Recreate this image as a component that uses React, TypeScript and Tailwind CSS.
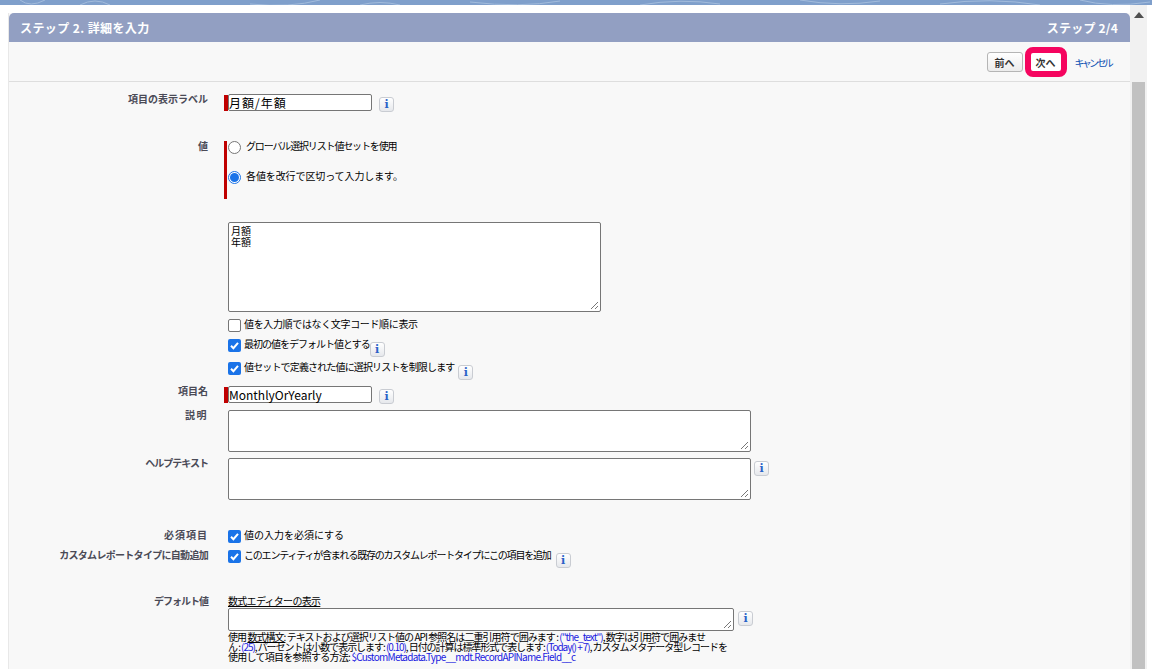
const FONT = '[font-family:"Noto_Sans_CJK_JP",sans-serif]'
const BLUE = 'text-[#1a1ae0]'

function Info({ className = '' }: { className?: string }) {
  return (
    <span className={`inline-flex w-[15px] h-[15px] flex-shrink-0 items-center justify-center rounded-[3px] border border-[#c9ccd2] bg-gradient-to-b from-white to-[#e6e8ec] text-[11px] leading-none font-bold text-[#2a62c8] [font-family:"DejaVu_Serif",serif] ${className}`}>
      i
    </span>
  )
}

function Check({ checked }: { checked?: boolean }) {
  if (!checked) {
    return <span className="w-[13px] h-[13px] flex-shrink-0 rounded-[2px] border border-[#767676] bg-white" />
  }
  return (
    <span className="w-[13px] h-[13px] flex-shrink-0 rounded-[2px] bg-[#1a73e8] flex items-center justify-center">
      <svg width="11" height="11" viewBox="0 0 11 11" fill="none">
        <path d="M2 5.8 L4.4 8.2 L9 2.8" stroke="white" strokeWidth="2" />
      </svg>
    </span>
  )
}

function Radio({ checked }: { checked?: boolean }) {
  return (
    <span className={`w-[13px] h-[13px] flex-shrink-0 rounded-full border bg-white flex items-center justify-center ${checked ? 'border-[#1a73e8]' : 'border-[#767676]'}`}>
      {checked && <span className="w-[9px] h-[9px] rounded-full bg-[#1a73e8]" />}
    </span>
  )
}

function Label({ children, className = '' }: { children: React.ReactNode; className?: string }) {
  return (
    <div className={`w-[199px] flex-shrink-0 -mt-[1px] whitespace-nowrap text-right text-[10px] leading-3 font-bold text-[#4a4a56] ${className}`}>
      {children}
    </div>
  )
}

function TextArea({ className, children }: { className: string; children?: React.ReactNode }) {
  return (
    <div className={`relative flex-shrink-0 rounded-[2px] border border-[#767676] bg-white px-[2px] py-[2px] text-[10px] leading-[11px] text-black ${className}`}>
      {children}
      <svg className="absolute right-[1px] bottom-[1px]" width="9" height="9" viewBox="0 0 9 9" stroke="#777" strokeWidth="1">
        <path d="M1 8 L8 1 M5 8 L8 5" />
      </svg>
    </div>
  )
}

function TextInput({ value, className = '' }: { value: string; className?: string }) {
  return (
    <div className={`w-[144px] h-[17px] flex-shrink-0 rounded-[2px] border border-[#767676] bg-white text-[12px] leading-[15px] text-black ${className}`}>
      {value}
    </div>
  )
}

export default function App() {
  return (
    <div className={`relative h-[669px] w-[1152px] overflow-hidden bg-white text-black ${FONT}`}>
      <div className="h-[5px] bg-[#7f9fcb] overflow-hidden">
        <svg width="1152" height="5" viewBox="0 0 1152 5" fill="none" stroke="#a3bcdc" strokeWidth="1">
          <path d="M20 0 Q30 8 45 0 M80 5 Q95 -3 110 5 M250 4 Q290 8 320 0 M360 5 Q380 0 400 5 M470 2 Q520 8 560 1 M640 5 Q680 -2 720 4 M800 0 Q840 7 880 1 M940 4 Q990 -3 1040 5 M1080 0 Q1110 8 1150 2" />
        </svg>
      </div>

      <div className="absolute right-[5px] top-[5px] bottom-0 w-[17px] bg-[#f1f1f1] flex flex-col items-center">
        <svg className="mt-[7px]" width="10" height="6" viewBox="0 0 10 6">
          <path d="M5 0 L10 6 L0 6 Z" fill="#505050" />
        </svg>
        <div className="mt-[64px] w-[13px] flex-1 bg-[#c1c1c1]" />
      </div>

      <div className="ml-[8px] mt-[8px] w-[1122px] h-[656px] overflow-hidden border-l border-[#e8e8e8] bg-[#f8f8f8]">
        <div className="h-[29px] rounded-t-[5px] bg-[#929fc2] pl-[11px] pr-[12px] flex items-center justify-between text-[12px] font-bold text-white">
          <span className="tracking-[0.4px]">ステップ 2. 詳細を入力</span>
          <span className="tracking-[0.2px]">ステップ 2/4</span>
        </div>

        <div className="h-[40px] border-b border-[#dedede] flex items-center justify-end pr-[19px] pt-[1px]">
          <button className="w-[36px] h-[20px] rounded-[3px] border border-[#b5b5b5] bg-gradient-to-b from-white to-[#ececec] text-[10px] font-bold text-[#333]">前へ</button>
          <span className="ml-[2px] w-[42px] h-[30px] rounded-[8px] border-[6px] border-[#f5055f] bg-white flex items-center justify-center text-[10px] font-bold text-[#333]">次へ</span>
          <a className="ml-[8px] whitespace-nowrap text-[10px] tracking-[-2.7px] text-[#0b4fb3]">キャンセル</a>
        </div>

        <div className="pt-[12px]">
          <div className="flex h-[47px]">
            <Label>項目の表示ラベル</Label>
            <div className="ml-[16px] w-[4px] h-[16px] mt-[1px] bg-[#c00000]" />
            <TextInput value="月額/年額" className="tracking-[1px]" />
            <Info className="ml-[7px] mt-[3px]" />
          </div>

          <div className="flex h-[81px]">
            <Label>値</Label>
            <div className="ml-[16px] w-[3px] h-[58px] bg-[#c00000]" />
            <div className="ml-[1px] flex flex-col text-[10px] leading-3">
              <div className="flex items-start gap-[5px] h-[30px]">
                <Radio />
                <span className="-mt-[1px] tracking-[-1.15px]">グローバル選択リスト値セットを使用</span>
              </div>
              <div className="flex items-start gap-[5px]">
                <Radio checked />
                <span className="-mt-[1px] tracking-[-0.1px]">各値を改行で区切って入力します。</span>
              </div>
            </div>
          </div>

          <div className="ml-[219px] flex flex-col text-[10px] leading-3">
            <TextArea className="w-[373px] h-[90px]">
              <div>月額</div>
              <div>年額</div>
            </TextArea>
            <div className="mt-[7px] flex items-start gap-[3px] h-[13px]">
              <Check />
              <span className="-mt-[1px] tracking-[-0.35px]">値を入力順ではなく文字コード順に表示</span>
            </div>
            <div className="mt-[7px] flex items-start h-[16px]">
              <Check checked />
              <span className="ml-[3px] -mt-[1px] tracking-[-1px]">最初の値をデフォルト値とする</span>
              <Info className="mt-[3px]" />
            </div>
            <div className="mt-[7px] flex items-start h-[16px]">
              <Check checked />
              <span className="ml-[3px] -mt-[1px] tracking-[-0.85px]">値セットで定義された値に選択リストを制限します</span>
              <Info className="ml-[4px] mt-[3px]" />
            </div>
          </div>

          <div className="mt-[8px] flex h-[24px]">
            <Label>項目名</Label>
            <div className="ml-[16px] w-[4px] h-[16px] mt-[1px] bg-[#c00000]" />
            <TextInput value="MonthlyOrYearly" />
            <Info className="ml-[7px] mt-[3px]" />
          </div>

          <div className="flex h-[48px]">
            <Label className="tracking-[1.5px]">説明</Label>
            <TextArea className="ml-[20px] w-[523px] h-[42px]" />
          </div>

          <div className="flex h-[72px]">
            <Label className="tracking-[-1px]">ヘルプテキスト</Label>
            <TextArea className="ml-[20px] w-[523px] h-[42px]" />
            <Info className="ml-[3px] mt-[3px]" />
          </div>

          <div className="flex h-[20px] text-[10px] leading-3">
            <Label className="tracking-[1px]">必須項目</Label>
            <div className="ml-[20px] flex items-start gap-[3px]">
              <Check checked />
              <span className="-mt-[1px]">値の入力を必須にする</span>
            </div>
          </div>

          <div className="flex h-[46px] text-[10px] leading-3">
            <Label className="tracking-[-0.7px]">カスタムレポートタイプに自動追加</Label>
            <div className="ml-[20px] flex items-start gap-[3px]">
              <Check checked />
              <span className="-mt-[1px] whitespace-nowrap tracking-[-1.2px]">このエンティティが含まれる既存のカスタムレポートタイプにこの項目を追加</span>
              <Info className="ml-[2px] mt-[3px]" />
            </div>
          </div>

          <div className="flex">
            <Label className="tracking-[-1px]">デフォルト値</Label>
            <div className="ml-[20px] w-[530px] text-[10px] leading-[10px]">
              <div className="h-[12px] leading-3 -mt-[1px] mb-[1px]">
                <span className="underline tracking-[-0.7px]">数式エディターの表示</span>
              </div>
              <div className="flex">
                <TextArea className="w-[506px] h-[23px]" />
                <Info className="ml-[4px] mt-[3px]" />
              </div>
              <div className="mt-[1px] whitespace-nowrap">
                <div className="tracking-[-0.95px]">
                  使用 <span className="underline">数式構文:</span> テキストおよび選択リスト値の API 参照名は二重引用符で囲みます : <span className={BLUE}>("the_text")</span>, 数字は引用符で囲みませ
                </div>
                <div className="tracking-[-1.05px]">
                  ん : <span className={BLUE}>(25)</span>, パーセントは小数で表示します: <span className={BLUE}>(0.10)</span>, 日付の計算は標準形式で表します: <span className={BLUE}>(Today() + 7)</span>, カスタムメタデータ型レコードを
                </div>
                <div className="tracking-[-0.75px]">
                  使用して項目を参照する方法: <span className={BLUE}>$CustomMetadata.Type__mdt.RecordAPIName.Field__c</span>
                </div>
              </div>
            </div>
          </div>
        </div>
      </div>
    </div>
  )
}
